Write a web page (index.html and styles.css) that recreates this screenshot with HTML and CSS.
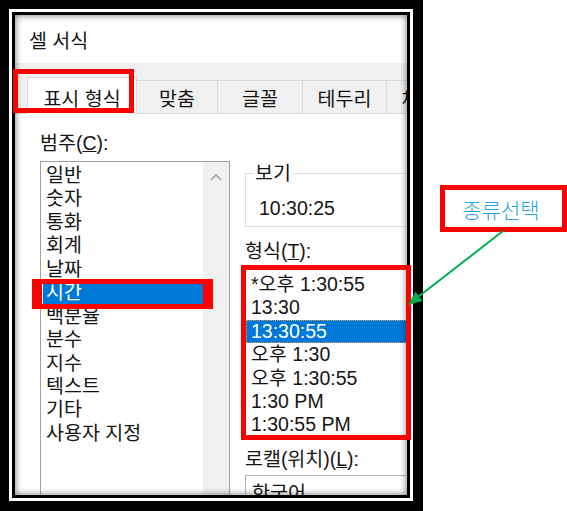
FILE: index.html
```html
<!DOCTYPE html>
<html lang="ko">
<head>
    <meta charset="UTF-8">
    <title>셀 서식 - 시간 형식</title>
    <link rel="stylesheet" href="styles.css">
</head>
<body>
<div class="page">
    <div class="frame">
        <div class="dialog">
            <div class="title">셀 서식</div>
            <div class="tabs">
                <div class="tab active">표시 형식</div>
                <div class="tab">맞춤</div>
                <div class="tab">글꼴</div>
                <div class="tab">테두리</div>
                <div class="tab">채우기</div>
            </div>
            <div class="pane">
                <div class="col-left">
                    <div class="label first">범주(<u>C</u>):</div>
                    <div class="listbox">
                        <ul class="items">
                            <li>일반</li>
                            <li>숫자</li>
                            <li>통화</li>
                            <li>회계</li>
                            <li>날짜</li>
                            <li class="sel">시간</li>
                            <li>백분율</li>
                            <li>분수</li>
                            <li>지수</li>
                            <li>텍스트</li>
                            <li>기타</li>
                            <li>사용자 지정</li>
                        </ul>
                        <div class="scrollbar">
                            <svg width="12" height="8" viewBox="0 0 12 8"><polyline points="1,7 6,2 11,7" fill="none" stroke="#a6a6a6" stroke-width="1.6"/></svg>
                        </div>
                    </div>
                </div>
                <div class="col-right">
                    <fieldset class="preview">
                        <legend>보기</legend>
                        <div class="preview-value">10:30:25</div>
                    </fieldset>
                    <div class="label">형식(<u>T</u>):</div>
                    <ul class="formats">
                        <li>*오후 1:30:55</li>
                        <li>13:30</li>
                        <li class="sel">13:30:55</li>
                        <li>오후 1:30</li>
                        <li>오후 1:30:55</li>
                        <li>1:30 PM</li>
                        <li>1:30:55 PM</li>
                    </ul>
                    <div class="label locale">로캘(위치)(<u>L</u>):</div>
                    <div class="combo">한국어</div>
                </div>
            </div>
        </div>
    </div>
    <div class="aside">
        <div class="callout">종류선택</div>
    </div>

    <!-- annotations drawn over the screenshot -->
    <div class="mark mark-tab"></div>
    <div class="mark mark-item"></div>
    <div class="mark mark-formats"></div>
    <svg class="arrow" width="567" height="511" viewBox="0 0 567 511">
        <line x1="503" y1="231" x2="418" y2="297" stroke="#00b050" stroke-width="2"/>
        <polygon points="408,305 422.7,301.1 415.4,291.7" fill="#00b050"/>
    </svg>
</div>
</body>
</html>
```

FILE: styles.css
```css
body {
    margin: 0;
    background-color: #fff;
    font-family: "Liberation Sans", "Noto Sans CJK KR", sans-serif;
    color: #151515;
}
.page {
    position: relative;
    display: flex;
    width: 567px;
    height: 511px;
}
.frame {
    flex: none;
    box-sizing: border-box;
    width: 423px;
    height: 511px;
    border: solid #000;
    border-width: 9px 10px 10px 9px;
    padding: 3px;
    background-color: #fff;
}
.dialog {
    position: relative;
    box-sizing: border-box;
    height: 100%;
    border: 3px solid #000;
    background-color: #fff;
    overflow: hidden;
}
.dialog:after {
    content: "";
    position: absolute;
    top: 0;
    left: 0;
    right: 0;
    bottom: 0;
    box-shadow: inset 0 0 6px 1px rgba(0, 0, 0, .45);
    pointer-events: none;
}
.title {
    height: 48px;
    display: flex;
    align-items: center;
    padding-left: 14px;
    font-size: 19.5px;
}
.tabs {
    box-sizing: border-box;
    height: 51px;
    display: flex;
    align-items: flex-end;
    padding-left: 12px;
    background-color: #f0f0f0;
    border-bottom: 1px solid #d9d9d9;
}
.tab {
    flex: none;
    box-sizing: border-box;
    height: 33px;
    display: flex;
    align-items: center;
    justify-content: center;
    border: 1px solid #d9d9d9;
    border-left: none;
    border-bottom: none;
    font-size: 19.5px;
}
.tab.active {
    width: 110px;
    height: 37px;
    margin-bottom: -1px;
    padding-top: 2px;
    border-left: 1px solid #d9d9d9;
    background-color: #fff;
}
.tab:nth-child(2) { width: 81px; }
.tab:nth-child(3) { width: 85px; }
.tab:nth-child(4) { width: 84px; }
.tab:nth-child(5) { width: 84px; }

.pane {
    display: flex;
    gap: 15px;
    padding-left: 25px;
}
.col-left {
    flex: none;
    width: 190px;
}
.col-right {
    flex: none;
    width: 230px;
}
.label {
    font-size: 19.5px;
    line-height: 24px;
    margin-top: 12px;
}
.label.first {
    margin-top: 17px;
}
.label.locale {
    margin-top: 8px;
}
.listbox {
    box-sizing: border-box;
    display: flex;
    width: 190px;
    height: 400px;
    margin-top: 6px;
    border: 1px solid #a0a0a0;
}
.items, .formats {
    list-style: none;
    margin: 0;
    font-size: 19.5px;
}
.items {
    flex: 1;
    padding: 2px 0 0 2px;
}
.items li {
    height: 23.45px;
    line-height: 23.45px;
    padding-left: 3px;
}
.sel {
    background-color: #0078d7;
    color: #fff;
}
.scrollbar {
    flex: none;
    width: 26px;
    background-color: #f0f0f0;
    text-align: center;
    padding-top: 5px;
}
.preview {
    margin: 47px 0 0;
    padding: 0 0 6px 8px;
    min-width: 0;
    border: 1px solid #dcdcdc;
}
.preview legend {
    padding: 0 2px 0 1px;
    font-size: 19.5px;
    line-height: 24px;
}
.preview-value {
    margin-top: 11px;
    padding-left: 5px;
    font-size: 19.5px;
    line-height: 24px;
}
.formats {
    margin-top: 5px;
    padding: 4px 0 1px;
    border: 1px solid #a0a0a0;
}
.formats li {
    height: 23.4px;
    line-height: 23.4px;
    padding-left: 5px;
}
.formats .sel {
    outline: 1px dotted #d9a45a;
    outline-offset: -1px;
}
.combo {
    height: 40px;
    margin-top: 4px;
    padding: 5px 0 0 6px;
    border: 1px solid #b4b4bc;
    font-size: 19.5px;
    line-height: 24px;
}

.aside {
    flex: none;
    padding: 185px 0 0 17px;
}
.callout {
    box-sizing: border-box;
    width: 127px;
    height: 47px;
    display: flex;
    align-items: center;
    justify-content: center;
    padding-right: 5px;
    border: 5px solid #ff0000;
    color: #1fa4e6;
    font-family: "Noto Sans CJK KR", sans-serif;
    font-size: 21px;
    font-weight: 300;
}

.mark {
    position: absolute;
    box-sizing: border-box;
    border: 5px solid #ff0000;
}
.mark-tab {
    left: 13px;
    top: 69px;
    width: 121px;
    height: 44px;
}
.mark-item {
    left: 32px;
    top: 279px;
    width: 181px;
    height: 30px;
    border-width: 5px 10px;
}
.mark-formats {
    left: 241px;
    top: 265px;
    width: 170px;
    height: 175px;
}
.arrow {
    position: absolute;
    top: 0;
    left: 0;
    pointer-events: none;
}
```
